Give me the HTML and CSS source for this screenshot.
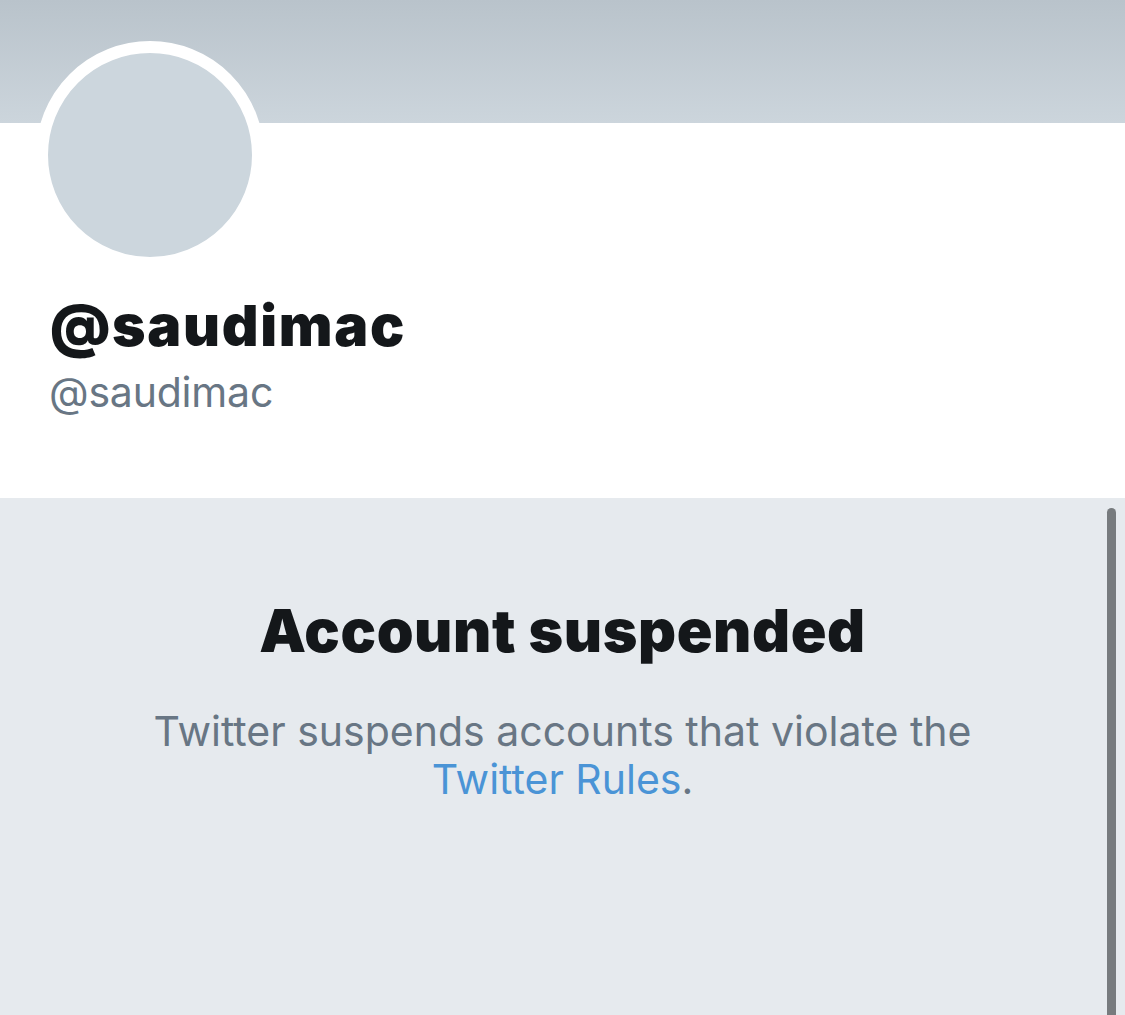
FILE: index.html
```html
<!DOCTYPE html>
<html lang="en">
<head>
<meta charset="utf-8">
<title>@saudimac</title>
<link rel="stylesheet" href="styles.css">
</head>
<body>
<div class="page">
  <header class="banner"></header>
  <section class="profile">
    <div class="avatar"></div>
    <h1 class="name">@saudimac</h1>
    <div class="handle">@saudimac</div>
  </section>
  <section class="suspended">
    <h2 class="title">Account suspended</h2>
    <p class="message">Twitter suspends accounts that violate the <a class="link" href="#">Twitter Rules</a>.</p>
    <div class="scrollbar"></div>
  </section>
</div>
</body>
</html>
```
FILE: styles.css
```css
* { box-sizing: border-box; }
html, body { margin: 0; padding: 0; }
body {
  font-family: Inter, "Noto Sans", "Liberation Sans", sans-serif;
  background: #e6eaee;
  width: 1125px;
  height: 1015px;
  overflow: hidden;
}
.page {
  display: flex;
  flex-direction: column;
  height: 1015px;
}
.banner {
  height: 123px;
  background: linear-gradient(to bottom, #b9c3cb, #ccd5dc);
  flex: none;
}
.profile {
  background: #ffffff;
  height: 375px;
  padding-left: 36px;
  flex: none;
}
.avatar {
  width: 228px;
  height: 228px;
  border-radius: 50%;
  border: 12px solid #ffffff;
  background: #ccd6dd;
  margin-top: -82px;
}
.name {
  margin: 25px 0 0 14px;
  font-size: 57px;
  font-weight: 900;
  line-height: 64px;
  color: #14171a;
  letter-spacing: 1.7px;
}
.handle {
  margin: 9px 0 0 13px;
  font-size: 41px;
  line-height: 50px;
  color: #687684;
  letter-spacing: -0.2px;
}
.suspended {
  flex: 1;
  position: relative;
  background: #e6eaee;
  text-align: center;
  padding-top: 98px;
}
.title {
  margin: 0;
  font-size: 59px;
  font-weight: 900;
  line-height: 70px;
  color: #14171a;
  letter-spacing: 0.6px;
}
.message {
  margin: 41px auto 0;
  width: 880px;
  font-size: 41px;
  line-height: 48px;
  color: #687684;
}
.link {
  color: #4a94d6;
  text-decoration: none;
}
.scrollbar {
  position: absolute;
  right: 9px;
  top: 10px;
  bottom: 0;
  width: 9px;
  border-radius: 5px 5px 0 0;
  background: #777b7e;
}
```
